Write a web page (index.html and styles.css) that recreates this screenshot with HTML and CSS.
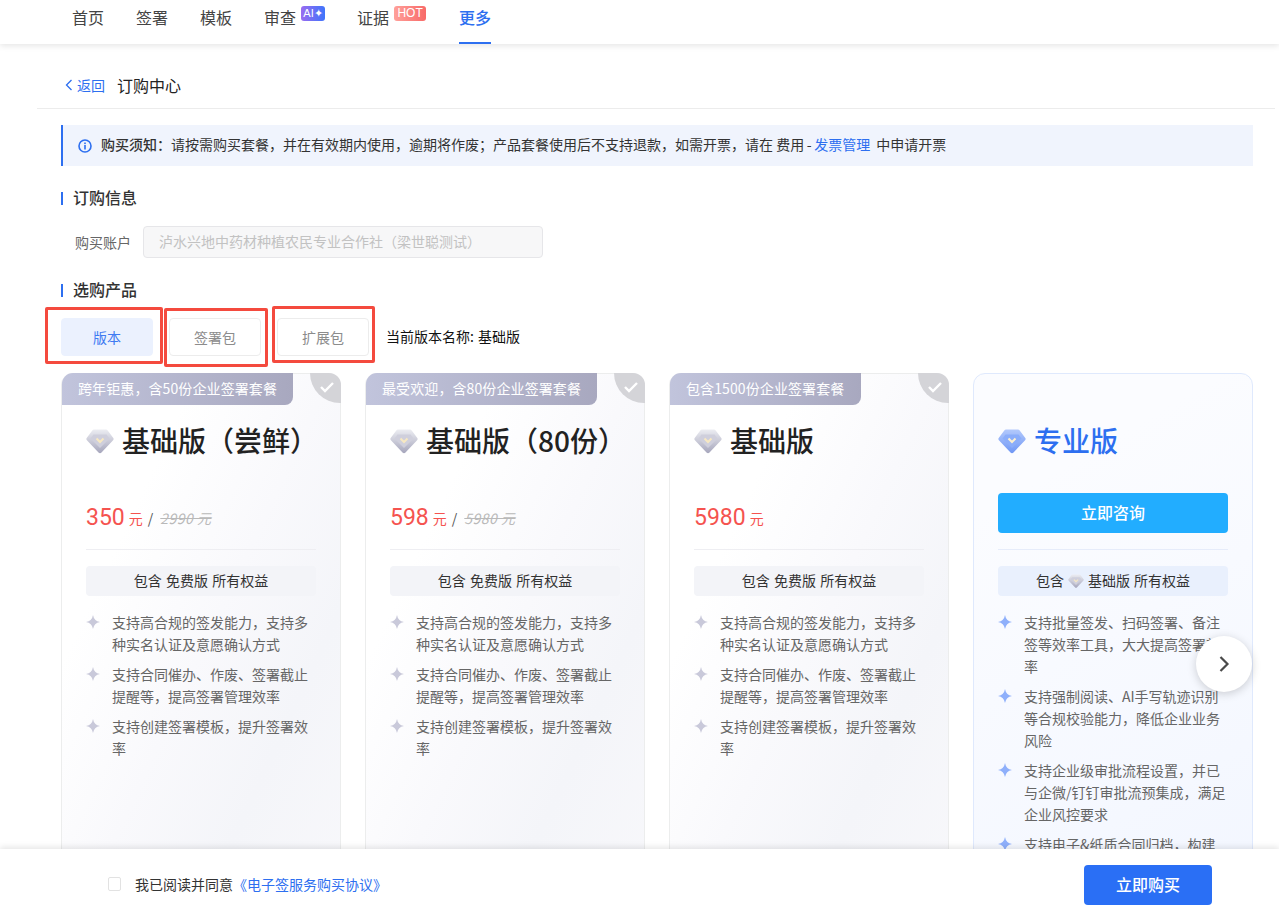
FILE: index.html
```html
<!DOCTYPE html>
<html lang="zh-CN">
<head>
<meta charset="utf-8">
<title>订购中心</title>
<link rel="stylesheet" href="styles.css">
</head>
<body>
<svg class="defs" width="0" height="0" aria-hidden="true">
  <defs>
    <linearGradient id="gGrey" x1="0" y1="0" x2="0" y2="1"><stop offset="0" stop-color="#ecedf2"/><stop offset="1" stop-color="#a6a6bc"/></linearGradient>
    <linearGradient id="gBlue" x1="0" y1="0" x2="0" y2="1"><stop offset="0" stop-color="#b3c9fc"/><stop offset="1" stop-color="#6f97f5"/></linearGradient>
    <symbol id="dia-grey" viewBox="0 0 28 28">
      <path d="M8 2.500h12q1 0 1.700 1l5.600 7.500q.8 1.200-.2 2.200L15.500 25.500q-1.500 1.300-3 0L.9 13.200q-1-1-.2-2.200L6.300 3.500q.7-1 1.700-1z" fill="url(#gGrey)"/>
      <path d="M4.500 11.500L14 21l9.500-9.500-3-4h-13z" fill="#cfcfdc"/>
      <path d="M10.500 11.500L14 15l3.500-3.500" fill="none" stroke="#f7e8c2" stroke-width="2"/>
    </symbol>
    <symbol id="dia-blue" viewBox="0 0 28 28">
      <path d="M8 2.500h12q1 0 1.700 1l5.600 7.500q.8 1.200-.2 2.200L15.500 25.500q-1.500 1.300-3 0L.9 13.200q-1-1-.2-2.200L6.300 3.500q.7-1 1.700-1z" fill="url(#gBlue)"/>
      <path d="M4.500 11.500L14 21l9.500-9.500-3-4h-13z" fill="#8badfa"/>
      <path d="M10.500 11.500L14 15l3.500-3.500" fill="none" stroke="#fdf0cf" stroke-width="2"/>
    </symbol>
    <symbol id="star" viewBox="0 0 14 14">
      <path d="M7 0Q8 6 14 7 8 8 7 14 6 8 0 7 6 6 7 0z"/>
    </symbol>
  </defs>
</svg>

<header class="topbar">
  <nav class="nav">
    <a class="nav-item">首页</a>
    <a class="nav-item">签署</a>
    <a class="nav-item">模板</a>
    <a class="nav-item">审查<span class="badge badge-ai">AI✦</span></a>
    <a class="nav-item">证据<span class="badge badge-hot">HOT</span></a>
    <a class="nav-item active">更多</a>
  </nav>
</header>

<main class="page">
  <div class="crumb">
    <a class="back">
      <svg class="back-icon" width="8" height="12" viewBox="0 0 8 12"><path d="M6.500 1L1.500 6l5 5" fill="none" stroke="#2d6ff0" stroke-width="1.300"/></svg>返回
    </a>
    <span class="crumb-title">订购中心</span>
  </div>

  <div class="content">
    <div class="notice">
      <svg class="notice-icon" width="14" height="14" viewBox="0 0 14 14"><circle cx="7" cy="7" r="6" fill="none" stroke="#2d6ff0" stroke-width="1.600"/><rect x="6.200" y="6" width="1.600" height="4.500" fill="#2d6ff0"/><rect x="6.200" y="3.500" width="1.600" height="1.600" fill="#2d6ff0"/></svg>
      <span><b class="notice-lead">购买须知&#xFF1A;</b>请按需购买套餐&#xFF0C;并在有效期内使用&#xFF0C;逾期将作废&#xFF1B;产品套餐使用后不支持退款&#xFF0C;如需开票&#xFF0C;请在 费用<span class="dash">-</span><a class="link notice-link">发票管理</a> 中申请开票</span>
    </div>

    <h2 class="section-title">订购信息</h2>
    <div class="account">
      <label class="account-label">购买账户</label>
      <div class="account-input">泸水兴地中药材种植农民专业合作社&#xFF08;梁世聪测试&#xFF09;</div>
    </div>

    <h2 class="section-title section-second">选购产品</h2>
    <div class="tabs">
      <div class="tab tab-on">版本</div>
      <div class="tab">签署包</div>
      <div class="tab">扩展包</div>
      <div class="tab-note">当前版本名称: 基础版</div>
      <span class="mark mark-1"></span>
      <span class="mark mark-2"></span>
      <span class="mark mark-3"></span>
    </div>

    <div class="cards">
      <article class="card">
        <div class="ribbon ribbon-w1">跨年钜惠&#xFF0C;含50份企业签署套餐</div>
        <div class="corner"><svg width="16" height="12" viewBox="0 0 16 12"><path d="M2 6l4 4 8-8" fill="none" stroke="#fff" stroke-width="2.400"/></svg></div>
        <div class="card-title"><svg class="dia"><use href="#dia-grey"/></svg><span>基础版&#xFF08;尝鲜&#xFF09;</span></div>
        <div class="price"><span class="num">350</span><span class="unit">元</span><span class="slash">/</span><s class="old">2990 元</s></div>
        <div class="include">包含 免费版 所有权益</div>
        <ul class="features">
          <li><svg class="star"><use href="#star"/></svg><span>支持高合规的签发能力&#xFF0C;支持多种实名认证及意愿确认方式</span></li>
          <li><svg class="star"><use href="#star"/></svg><span>支持合同催办、作废、签署截止提醒等&#xFF0C;提高签署管理效率</span></li>
          <li><svg class="star"><use href="#star"/></svg><span>支持创建签署模板&#xFF0C;提升签署效率</span></li>
        </ul>
      </article>

      <article class="card">
        <div class="ribbon ribbon-w1">最受欢迎&#xFF0C;含80份企业签署套餐</div>
        <div class="corner"><svg width="16" height="12" viewBox="0 0 16 12"><path d="M2 6l4 4 8-8" fill="none" stroke="#fff" stroke-width="2.400"/></svg></div>
        <div class="card-title"><svg class="dia"><use href="#dia-grey"/></svg><span>基础版&#xFF08;80份&#xFF09;</span></div>
        <div class="price"><span class="num">598</span><span class="unit">元</span><span class="slash">/</span><s class="old">5980 元</s></div>
        <div class="include">包含 免费版 所有权益</div>
        <ul class="features">
          <li><svg class="star"><use href="#star"/></svg><span>支持高合规的签发能力&#xFF0C;支持多种实名认证及意愿确认方式</span></li>
          <li><svg class="star"><use href="#star"/></svg><span>支持合同催办、作废、签署截止提醒等&#xFF0C;提高签署管理效率</span></li>
          <li><svg class="star"><use href="#star"/></svg><span>支持创建签署模板&#xFF0C;提升签署效率</span></li>
        </ul>
      </article>

      <article class="card">
        <div class="ribbon ribbon-w2">包含1500份企业签署套餐</div>
        <div class="corner"><svg width="16" height="12" viewBox="0 0 16 12"><path d="M2 6l4 4 8-8" fill="none" stroke="#fff" stroke-width="2.400"/></svg></div>
        <div class="card-title"><svg class="dia"><use href="#dia-grey"/></svg><span>基础版</span></div>
        <div class="price"><span class="num">5980</span><span class="unit">元</span></div>
        <div class="include">包含 免费版 所有权益</div>
        <ul class="features">
          <li><svg class="star"><use href="#star"/></svg><span>支持高合规的签发能力&#xFF0C;支持多种实名认证及意愿确认方式</span></li>
          <li><svg class="star"><use href="#star"/></svg><span>支持合同催办、作废、签署截止提醒等&#xFF0C;提高签署管理效率</span></li>
          <li><svg class="star"><use href="#star"/></svg><span>支持创建签署模板&#xFF0C;提升签署效率</span></li>
        </ul>
      </article>

      <article class="card card-pro">
        <div class="card-title"><svg class="dia"><use href="#dia-blue"/></svg><span>专业版</span></div>
        <a class="consult">立即咨询</a>
        <div class="include">包含<svg class="dia-mini"><use href="#dia-grey"/></svg>基础版 所有权益</div>
        <ul class="features">
          <li><svg class="star"><use href="#star"/></svg><span>支持批量签发、扫码签署、备注签等效率工具&#xFF0C;大大提高签署效率</span></li>
          <li><svg class="star"><use href="#star"/></svg><span>支持强制阅读、AI手写轨迹识别等合规校验能力&#xFF0C;降低企业业务风险</span></li>
          <li><svg class="star"><use href="#star"/></svg><span>支持企业级审批流程设置&#xFF0C;并已与企微/钉钉审批流预集成&#xFF0C;满足企业风控要求</span></li>
          <li><svg class="star"><use href="#star"/></svg><span>支持电子&amp;纸质合同归档&#xFF0C;构建</span></li>
        </ul>
      </article>
    </div>
  </div>
</main>

<button class="next" aria-label="下一个">
  <svg width="12" height="18" viewBox="0 0 12 18"><path d="M2.500 2l7 7-7 7" fill="none" stroke="#4a4a4a" stroke-width="2.200"/></svg>
</button>

<footer class="footbar">
  <label class="agree"><span class="checkbox"></span>我已阅读并同意<a class="link">《电子签服务购买协议》</a></label>
  <a class="buy">立即购买</a>
</footer>
</body>
</html>
```

FILE: styles.css
```css
* { box-sizing: border-box; }
html, body { margin: 0; height: 917px; overflow: hidden; background: #fff; }
body {
  font-family: "Noto Sans CJK SC", "Noto Sans", sans-serif;
  font-size: 14px;
  color: #333;
}
.defs { position: absolute; }
.topbar {
  height: 44px;
  background: #fff;
  box-shadow: 0 2px 6px rgba(0, 0, 0, 0.1);
  padding-left: 72px;
}
.nav { display: flex; gap: 32px; height: 44px; }
.nav-item {
  display: flex;
  align-items: flex-start;
  font-size: 16px;
  line-height: 34px;
  height: 44px;
  color: #444;
}
.nav-item.active {
  margin-left: 1px;
  color: #2d6ff0;
  font-weight: 500;
  border-bottom: 2px solid #2d6ff0;
}
.badge {
  margin-top: 6px;
  height: 15px;
  border-radius: 3px;
  color: #fff;
  font-family: "Liberation Sans", sans-serif;
  font-size: 11px;
  line-height: 15px;
  text-align: center;
}
.badge-ai { margin-left: 5px; width: 24px; background: linear-gradient(90deg, #9a6cf0, #3f74fb); }
.badge-hot { margin-left: 5px; width: 32px; font-size: 12px; background: linear-gradient(90deg, #ffa09a, #f86a68); }

.page { padding: 0 4px 0 37px; }
.crumb {
  display: flex;
  align-items: center;
  height: 65px;
  padding: 17px 0 0 28px;
  border-bottom: 1px solid #ececec;
}
.back { display: flex; align-items: center; color: #2d6ff0; line-height: 20px; }
.back-icon { margin-right: 4px; }
.crumb-title { margin-left: 12px; font-size: 16px; color: #222; }
.content { padding: 16px 22px 0 24px; }

.notice {
  display: flex;
  align-items: center;
  height: 41px;
  padding: 0 0 3px 15px;
  background: #f0f4fd;
  border-left: 2px solid #2d6ff0;
  color: #333;
  line-height: 20px;
}
.notice-icon { margin: 3px 9px 0 0; flex: none; }
.notice-lead { font-weight: 500; }
.link { color: #2d6ff0; }
.dash { display: inline-block; width: 10px; text-align: center; }
.notice-link { margin-right: 3px; }

.section-title {
  margin: 21px 0 0;
  padding-left: 12px;
  height: 22px;
  font-size: 16px;
  font-weight: 500;
  line-height: 20px;
  color: #333;
  background: linear-gradient(#2d6ff0, #2d6ff0) left center / 2px 13px no-repeat;
}
.section-second { margin-top: 21px; }

.account { display: flex; align-items: center; margin-top: 17px; padding-left: 14px; }
.account-label { width: 68px; color: #666; line-height: 28px; }
.account-input {
  width: 400px;
  height: 32px;
  padding-left: 15px;
  background: #f7f7f8;
  border: 1px solid #e6e6e9;
  border-radius: 4px;
  line-height: 28px;
  color: #c2c2c2;
}

.tabs { position: relative; display: flex; align-items: center; gap: 16px; margin-top: 17px; }
.tab {
  width: 92px;
  height: 38px;
  border: 1px solid #ececec;
  border-radius: 4px;
  text-align: center;
  line-height: 37px;
  color: #8c8c8c;
}
.tab-on { background: #ebf1fe; border-color: #ebf1fe; color: #3f7bf2; }
.tab-note { color: #111; margin: 0 0 2px 1px; word-spacing: 1px; }
.mark { position: absolute; border: 3px solid #f44a3e; border-radius: 2px; pointer-events: none; }
.mark-1 { left: -16px; top: -11px; width: 118px; height: 57px; }
.mark-2 { left: 103px; top: -10px; width: 104px; height: 59px; }
.mark-3 { left: 211px; top: -12px; width: 103px; height: 57px; }

.cards { display: flex; gap: 24px; margin-top: 17px; }
.card {
  position: relative;
  flex: none;
  width: 280px;
  height: 560px;
  padding: 0 24px;
  border: 1px solid #eceded;
  border-radius: 12px;
  background: linear-gradient(115deg, #fff 25%, #f9f9fc 50%, #f4f5f9 72%, #f8f8fb 100%);
}
.ribbon {
  position: absolute;
  left: 0;
  top: -1px;
  height: 32px;
  padding-left: 16px;
  border-top-left-radius: 11px;
  border-bottom-right-radius: 8px;
  background: linear-gradient(90deg, #c1c4dc, #a8a8bf);
  color: #fff;
  letter-spacing: 0.1px;
  line-height: 31px;
}
.ribbon-w1 { width: 231px; }
.ribbon-w2 { width: 191px; }
.corner {
  position: absolute;
  right: -1px;
  top: -1px;
  width: 31px;
  height: 30px;
  display: flex;
  align-items: center;
  justify-content: center;
  padding: 0 1px 3px 3px;
  background: #d4d4d8;
  border-top-right-radius: 12px;
  border-bottom-left-radius: 30px;
}
.card-title {
  display: flex;
  align-items: center;
  gap: 8px;
  height: 40px;
  margin-top: 47px;
  font-size: 28px;
  font-weight: 500;
  color: #222;
}
.card-title span { padding-bottom: 2px; }
.dia { width: 28px; height: 28px; flex: none; }
.price {
  display: flex;
  align-items: center;
  height: 56px;
  margin: 33px 0 16px;
  padding-bottom: 8px;
  border-bottom: 1px solid #eeeef2;
  color: #333;
}
.num { font-family: Roboto, sans-serif; font-size: 23px; font-weight: 400; color: #f5534f; }
.unit { margin-left: 4px; color: #f5534f; }
.old { margin-left: 7px; color: #b9b9b9; font-style: italic; letter-spacing: 0.5px; }
.slash { margin-left: 5px; color: #555; }
.include {
  display: flex;
  align-items: center;
  justify-content: center;
  gap: 4px;
  height: 30px;
  padding-bottom: 2px;
  background: #f3f4f8;
  border-radius: 4px;
  color: #333;
  white-space: pre;
  word-spacing: 1px;
}
.features { list-style: none; margin: 15px 0 0; padding: 0; width: 230px; }
.features li { display: flex; gap: 12px; margin-bottom: 8px; line-height: 22px; color: #666; }
.star { flex: none; width: 14px; height: 14px; margin-top: 4px; fill: #c9c9da; }

.card-pro {
  border-color: #dfe9fd;
  background: linear-gradient(150deg, #fbfcff 20%, #f2f6ff 100%);
}
.card-pro .card-title { color: #2d6ff0; }
.card-pro .include { background: #e9f0fd; }
.card-pro .star { fill: #8fb0fb; }
.dia-mini { width: 16px; height: 16px; margin-top: 1px; }
.consult {
  display: block;
  height: 40px;
  margin: 32px 0 33px;
  background: #22adff;
  border-radius: 4px;
  color: #fff;
  font-size: 16px;
  font-weight: 500;
  line-height: 38px;
  text-align: center;
  position: relative;
}
.consult::after {
  content: "";
  position: absolute;
  left: 0;
  right: 0;
  bottom: -17px;
  border-bottom: 1px solid #e6ecfa;
}

.next {
  position: absolute;
  left: 1196px;
  top: 636px;
  width: 56px;
  height: 56px;
  padding: 0;
  border: 0;
  border-radius: 50%;
  background: #fff;
  box-shadow: 0 2px 10px rgba(0, 0, 0, 0.18);
  display: flex;
  align-items: center;
  justify-content: center;
}

.footbar {
  position: absolute;
  left: 0;
  right: 0;
  top: 849px;
  height: 68px;
  display: flex;
  align-items: center;
  justify-content: space-between;
  padding: 4px 67px 0 108px;
  background: #fff;
  box-shadow: 0 -2px 6px rgba(0, 0, 0, 0.1);
}
.agree { display: flex; align-items: center; color: #333; line-height: 20px; padding-bottom: 2px; }
.checkbox {
  width: 13px;
  height: 14px;
  margin-right: 14px;
  background: #fff;
  border: 1px solid #e2e2e2;
  border-radius: 2px;
}
.buy {
  width: 128px;
  height: 40px;
  background: #2a6ff5;
  border-radius: 4px;
  color: #fff;
  font-size: 16px;
  font-weight: 500;
  line-height: 38px;
  text-align: center;
}
```
